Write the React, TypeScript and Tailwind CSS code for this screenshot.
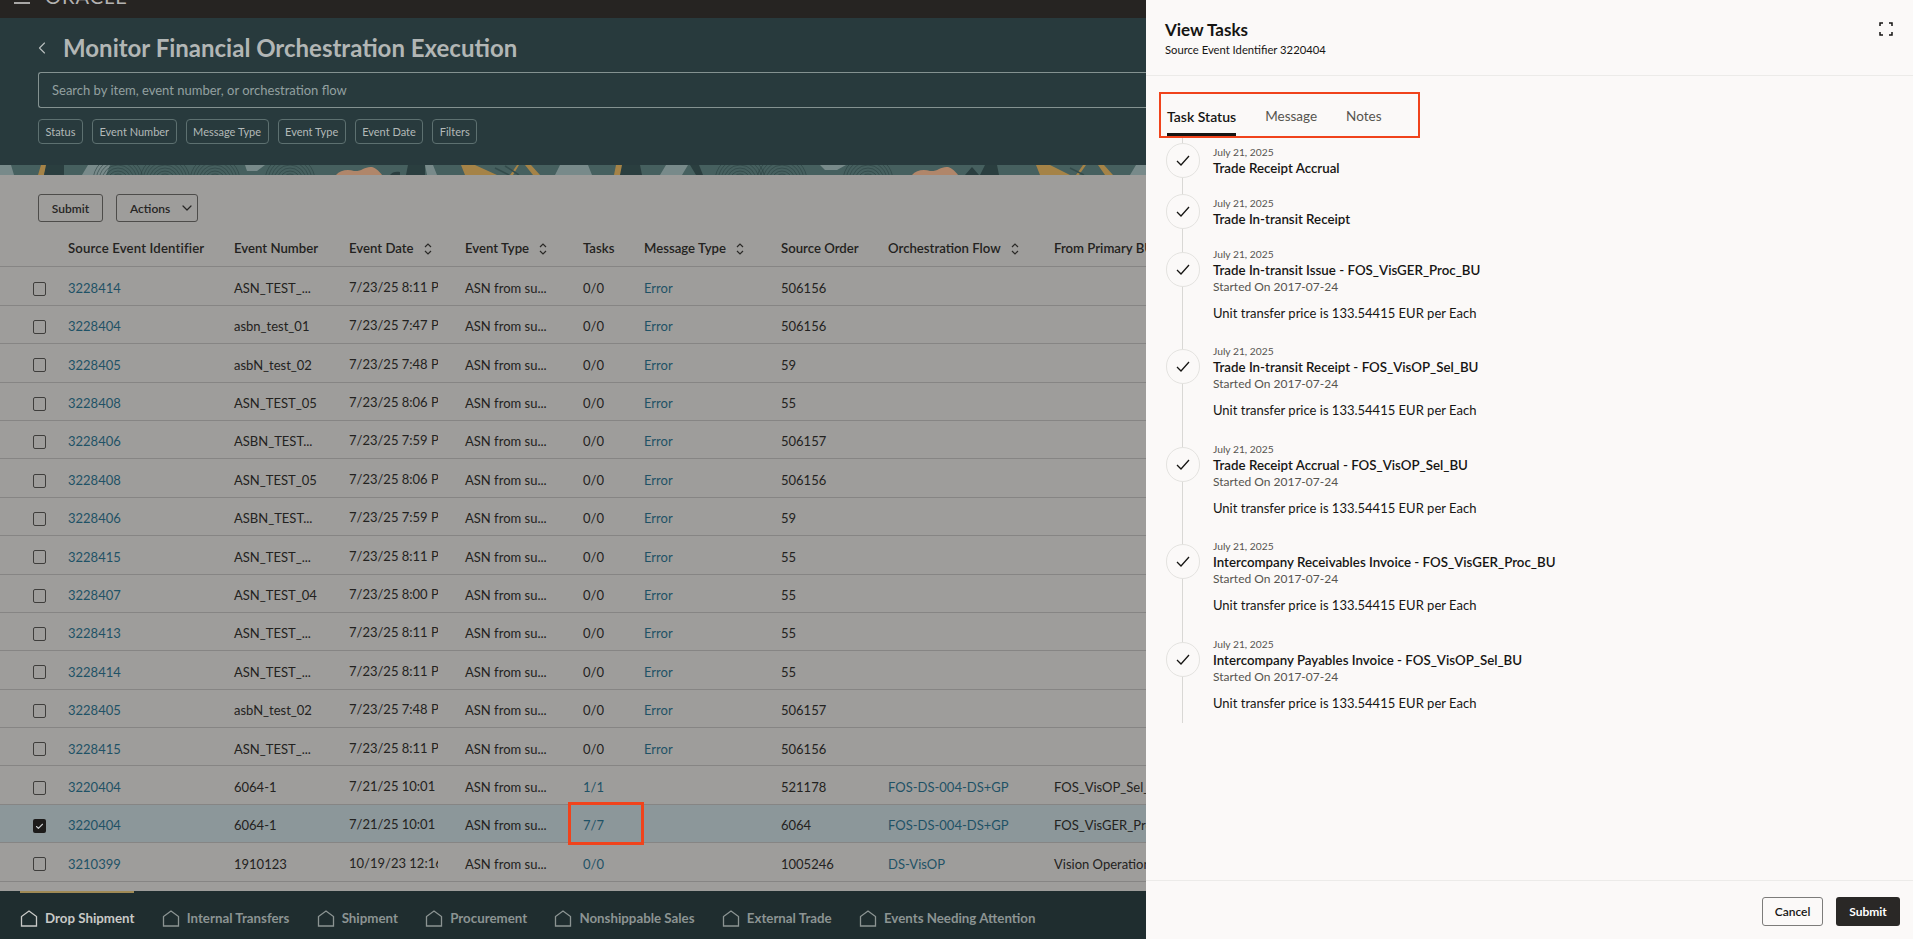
import { ChevronLeft, ChevronDown, Check } from 'lucide-react';

const font = "font-['Lato','Noto_Sans',sans-serif]";

const rows = [
  { id: '3228414', num: 'ASN_TEST_...', date: '7/23/25 8:11 PM', tasks: '0/0', msg: 'Error', order: '506156', flow: '', primary: '' },
  { id: '3228404', num: 'asbn_test_01', date: '7/23/25 7:47 PM', tasks: '0/0', msg: 'Error', order: '506156', flow: '', primary: '' },
  { id: '3228405', num: 'asbN_test_02', date: '7/23/25 7:48 PM', tasks: '0/0', msg: 'Error', order: '59', flow: '', primary: '' },
  { id: '3228408', num: 'ASN_TEST_05', date: '7/23/25 8:06 PM', tasks: '0/0', msg: 'Error', order: '55', flow: '', primary: '' },
  { id: '3228406', num: 'ASBN_TEST...', date: '7/23/25 7:59 PM', tasks: '0/0', msg: 'Error', order: '506157', flow: '', primary: '' },
  { id: '3228408', num: 'ASN_TEST_05', date: '7/23/25 8:06 PM', tasks: '0/0', msg: 'Error', order: '506156', flow: '', primary: '' },
  { id: '3228406', num: 'ASBN_TEST...', date: '7/23/25 7:59 PM', tasks: '0/0', msg: 'Error', order: '59', flow: '', primary: '' },
  { id: '3228415', num: 'ASN_TEST_...', date: '7/23/25 8:11 PM', tasks: '0/0', msg: 'Error', order: '55', flow: '', primary: '' },
  { id: '3228407', num: 'ASN_TEST_04', date: '7/23/25 8:00 PM', tasks: '0/0', msg: 'Error', order: '55', flow: '', primary: '' },
  { id: '3228413', num: 'ASN_TEST_...', date: '7/23/25 8:11 PM', tasks: '0/0', msg: 'Error', order: '55', flow: '', primary: '' },
  { id: '3228414', num: 'ASN_TEST_...', date: '7/23/25 8:11 PM', tasks: '0/0', msg: 'Error', order: '55', flow: '', primary: '' },
  { id: '3228405', num: 'asbN_test_02', date: '7/23/25 7:48 PM', tasks: '0/0', msg: 'Error', order: '506157', flow: '', primary: '' },
  { id: '3228415', num: 'ASN_TEST_...', date: '7/23/25 8:11 PM', tasks: '0/0', msg: 'Error', order: '506156', flow: '', primary: '' },
  { id: '3220404', num: '6064-1', date: '7/21/25 10:01 PM', tasks: '1/1', msg: '', order: '521178', flow: 'FOS-DS-004-DS+GP', primary: 'FOS_VisOP_Sel_BU' },
  { id: '3220404', num: '6064-1', date: '7/21/25 10:01 PM', tasks: '7/7', msg: '', order: '6064', flow: 'FOS-DS-004-DS+GP', primary: 'FOS_VisGER_Proc_BU', selected: true },
  { id: '3210399', num: '1910123', date: '10/19/23 12:16 PM', tasks: '0/0', msg: '', order: '1005246', flow: 'DS-VisOP', primary: 'Vision Operations' },
];

const chips = ['Status', 'Event Number', 'Message Type', 'Event Type', 'Event Date', 'Filters'];
const tabs = ['Drop Shipment', 'Internal Transfers', 'Shipment', 'Procurement', 'Nonshippable Sales', 'External Trade', 'Events Needing Attention'];

const tasks = [
  { title: 'Trade Receipt Accrual' },
  { title: 'Trade In-transit Receipt' },
  { title: 'Trade In-transit Issue - FOS_VisGER_Proc_BU', detail: true },
  { title: 'Trade In-transit Receipt - FOS_VisOP_Sel_BU', detail: true },
  { title: 'Trade Receipt Accrual - FOS_VisOP_Sel_BU', detail: true },
  { title: 'Intercompany Receivables Invoice - FOS_VisGER_Proc_BU', detail: true },
  { title: 'Intercompany Payables Invoice - FOS_VisOP_Sel_BU', detail: true },
];

function SortIcon() {
  return (
    <svg width="10" height="14" viewBox="0 0 10 14" fill="none" stroke="#2b2a28" strokeWidth="1.2" className="ml-[9px] shrink-0">
      <path d="M2 5l3-3 3 3M2 9l3 3 3-3" />
    </svg>
  );
}

function HouseIcon({ active }: { active?: boolean }) {
  return (
    <svg width="18" height="17" viewBox="0 0 18 17" fill="none" stroke={active ? '#c9c9c7' : '#8c9493'} strokeWidth="1.3" className="shrink-0">
      <path d="M1.500 16V6.500L9 1l7.500 5.500V16z" />
    </svg>
  );
}

// banner strip under the header: the bottom edge of a bigger illustration
function Pattern() {
  const rings = [118, 165, 215, 290, 740, 782, 868];
  return (
    <svg width="1146" height="10" viewBox="0 0 1146 10" className="block">
      <rect width="1146" height="10" fill="#46605f" />
      <path d="M0 0h11l3 10H0zM82 10l6-10h22l-4 10zM245 0h20l-8 6h-10zM425 0h8l4 10h-10zM555 10l5-10h28l4 10zM660 10l6-10h22l-6 10zM820 0h26l-9 5h-12zM1130 10l6-10h10v10z" fill="#788a8a" />
      <path d="M41 0h6l-3 10h-6zM461 0h14l22 10h-32zM510 10l7-10h2l-6 10zM525 0h6l9 10h-7zM616 0h7l-2 10h-7zM1036 0h14l20 10h-30zM1076 10l7-10h3l-7 10zM1098 0h6l9 10h-8z" fill="#a58347" />
      <path d="M336 10c4-5 12-6 18-4 7 1 11-5 18-4 4 1 8 5 10 8zM912 10c4-5 12-6 18-4 7 1 11-5 18-4 4 1 8 5 10 8z" fill="#b0866a" />
      <path d="M46 0h18l0 10h-20zM390 10c2-3 6-4 10-3v3zM408 0h17v10h-19zM622 0h18l2 10h-22zM690 0h9l4 10h-7zM965 10l7-8 7 8zM980 10l5-10h12l2 10z" fill="#2a3e3f" />
      <g fill="none" stroke="#2c4142" strokeWidth="0.6">
        {rings.map(x => (
          <g key={x}>
            {[7, 10, 13, 16, 19, 22, 25].map(r => (
              <circle key={r} cx={x} cy="16" r={r} />
            ))}
          </g>
        ))}
      </g>
      <path d="M495 3l14 7M505 1l14 9M1070 3l14 7" stroke="#344c4c" strokeWidth="1.500" />
    </svg>
  );
}

function Checkbox({ checked }: { checked?: boolean }) {
  return checked ? (
    <span className="flex h-[14px] w-[13px] items-center justify-center rounded-[2px] bg-[#1d1b1a]">
      <Check size={9} strokeWidth={3} color="#c9cdce" />
    </span>
  ) : (
    <span className="block h-[14px] w-[13px] rounded-[2px] border border-[#3f3e3c]" />
  );
}

export default function App() {
  return (
    <div className={`relative h-[939px] w-[1913px] overflow-hidden bg-[#9e9d9b] ${font}`}>
      <div className="flex h-full w-[1146px] flex-col overflow-hidden">
        <div className="relative h-[18px] shrink-0 overflow-hidden bg-[#262422]">
          <div className="absolute left-[14px] top-[2px] h-[2px] w-[16px] bg-[#a8a7a6]" />
          <div className="absolute left-[45px] top-[-14px] text-[20px] leading-[20px] tracking-[1px] text-[#b3b2b1]">ORACLE</div>
        </div>

        <div className="h-[147px] shrink-0 bg-[#283a3d] pl-[38px]">
          <div className="flex h-[54px] items-center pt-[5px]">
            <ChevronLeft size={20} strokeWidth={1.4} color="#b6bcbc" className="ml-[-6px]" />
            <h1 className="ml-[11px] text-[24px] font-bold whitespace-nowrap text-[#b2b6b5]">Monitor Financial Orchestration Execution</h1>
          </div>
          <div className="flex h-[36px] items-center rounded-l-[3px] border border-r-0 border-[#849291] pl-[13px] pt-[1px] text-[13px] text-[#93a0a0]">
            Search by item, event number, or orchestration flow
          </div>
          <div className="mt-[11px] flex gap-[9px]">
            {chips.map(c => (
              <span key={c} className="flex h-[25px] items-center rounded-[4px] border border-[#5d7070] px-[6.5px] pt-[1px] text-[11px] whitespace-nowrap text-[#b3b9b8]">{c}</span>
            ))}
          </div>
        </div>

        <Pattern />

        <div className="flex shrink-0 gap-[13px] pl-[38px] pt-[19px]">
          <button className="h-[28px] w-[65px] rounded-[3px] border border-[#4d4c4a] pt-[1px] text-[12px] font-semibold text-[#262524]">Submit</button>
          <button className="flex h-[28px] w-[82px] items-center gap-[9px] rounded-[3px] border border-[#4d4c4a] pl-[13px] text-[12px] font-semibold text-[#262524]">
            <span className="pt-[1px]">Actions</span> <ChevronDown size={16} strokeWidth={1.8} />
          </button>
        </div>

        <div className="mt-[11px] flex h-[34.4px] shrink-0 items-center border-b border-[#868584] pb-[2px] text-[13.2px] font-semibold whitespace-nowrap text-[#232220]">
          <div className="w-[68px] shrink-0" />
          <div className="w-[166px] shrink-0 tracking-[0.15px]">Source Event Identifier</div>
          <div className="w-[115px] shrink-0">Event Number</div>
          <div className="flex w-[116px] shrink-0 items-center">Event Date<SortIcon /></div>
          <div className="flex w-[118px] shrink-0 items-center">Event Type<SortIcon /></div>
          <div className="w-[61px] shrink-0">Tasks</div>
          <div className="flex w-[137px] shrink-0 items-center">Message Type<SortIcon /></div>
          <div className="w-[107px] shrink-0">Source Order</div>
          <div className="flex w-[166px] shrink-0 items-center">Orchestration Flow<SortIcon /></div>
          <div className="shrink-0">From Primary BU</div>
        </div>

        {rows.map((r, i) => (
          <div key={i} className={`flex h-[38.4px] shrink-0 items-center border-b border-[#868584] pt-[5px] text-[13px] whitespace-nowrap text-[#232220] ${r.selected ? 'bg-[#8c979a]' : ''}`}>
            <div className="w-[68px] shrink-0 pl-[33px]"><Checkbox checked={r.selected} /></div>
            <div className="w-[166px] shrink-0 text-[#1f5266]">{r.id}</div>
            <div className="w-[115px] shrink-0">{r.num}</div>
            <div className="w-[116px] shrink-0"><div className="mt-[-2px] w-[89px] overflow-hidden">{r.date}</div></div>
            <div className="w-[118px] shrink-0">ASN from su...</div>
            <div className={`w-[61px] shrink-0 ${r.tasks === '0/0' && r.msg ? '' : 'text-[#1f5266]'}`}>{r.tasks}</div>
            <div className="w-[137px] shrink-0 text-[#1f5266]">{r.msg}</div>
            <div className="w-[107px] shrink-0">{r.order}</div>
            <div className="w-[166px] shrink-0 text-[#1f5266]">{r.flow}</div>
            <div className="shrink-0">{r.primary}</div>
          </div>
        ))}

        <div className="mt-auto flex h-[48px] shrink-0 gap-[27.3px] bg-[#1f2d2f] pl-[20px]">
          {tabs.map((t, i) => (
            <div key={t} className={`relative flex h-full items-center gap-[7px] pt-[7px] text-[13.3px] font-bold whitespace-nowrap ${i === 0 ? 'text-[#c9c9c7]' : 'text-[#8c9493]'}`}>
              <HouseIcon active={i === 0} />
              <span className="pt-[1px]">{t}</span>
              {i === 0 && <div className="absolute left-0 right-0 top-0 h-[2px] bg-[#a08a55]" />}
            </div>
          ))}
        </div>
      </div>

      <div className="absolute left-[568px] top-[802px] h-[43px] w-[76px] border-[3px] border-[#f0431c]" />

      <aside className="absolute inset-y-0 right-0 flex w-[767px] flex-col bg-[#fbf9f8] text-[#161513]">
        <div className="flex h-[76px] shrink-0 justify-between border-b border-[#ecebe9] pl-[19px] pr-[20px] pt-[19px]">
          <div>
            <div className="text-[17px] leading-[22px] font-bold">View Tasks</div>
            <div className="mt-[1px] text-[11.25px] leading-[16px]">Source Event Identifier 3220404</div>
          </div>
          <svg width="14" height="14" viewBox="0 0 14 14" fill="none" stroke="#161513" strokeWidth="1.5" className="mt-[3px]">
            <path d="M1 4V1h3M10 1h3v3M13 10v3h-3M4 13H1v-3" />
          </svg>
        </div>

        <div className="ml-[13px] mt-[16px] flex h-[46px] w-[261px] shrink-0 items-end gap-[29px] border-[2px] border-[#f0431c] pl-[6px]">
          {['Task Status', 'Message', 'Notes'].map((t, i) => (
            <div key={t} className={`h-[31px] pt-[1px] ${i === 0 ? 'border-b-[3px] border-[#161513] text-[14px] font-semibold' : 'text-[13.5px] text-[#56544f]'}`}>{t}</div>
          ))}
        </div>

        <div className="relative ml-[20px] mt-[5px] flex-1">
          <div className="absolute left-[16px] top-[-5px] h-[585px] w-px bg-[#d9d8d5]" />
          {tasks.map(t => (
            <div key={t.title} className={`relative flex gap-[13px] ${t.detail ? 'h-[97.4px]' : 'h-[51px]'}`}>
              <div className={`flex h-[35px] w-[34px] shrink-0 items-center justify-center rounded-full border border-[#e4e3e0] bg-[#fbf9f8] ${t.detail ? 'mt-[7px]' : ''}`}>
                <svg width="14" height="11" viewBox="0 0 14 11" fill="none" stroke="#161513" strokeWidth="1.3">
                  <path d="M1 6l4 4 8-9" />
                </svg>
              </div>
              <div className="pt-[2px]">
                <div className="text-[10.25px] leading-[14px] text-[#56544f]">July 21, 2025</div>
                <div className="mt-[1px] text-[13.3px] leading-[17px] font-semibold">{t.title}</div>
                {t.detail && <div className="text-[12px] leading-[15px] text-[#56544f]">Started On 2017-07-24</div>}
                {t.detail && <div className="mt-[11px] text-[13px] leading-[17px]">Unit transfer price is 133.54415 EUR per Each</div>}
              </div>
            </div>
          ))}
        </div>

        <div className="flex h-[59px] shrink-0 items-start justify-end gap-[13px] border-t border-[#ecebe9] pr-[13px] pt-[16px]">
          <button className="h-[29px] w-[61px] rounded-[3px] border border-[#7d7c7a] text-[12px] font-semibold">Cancel</button>
          <button className="h-[29px] w-[64px] rounded-[3px] bg-[#2a2826] text-[12px] font-bold text-white">Submit</button>
        </div>
      </aside>
    </div>
  );
}
